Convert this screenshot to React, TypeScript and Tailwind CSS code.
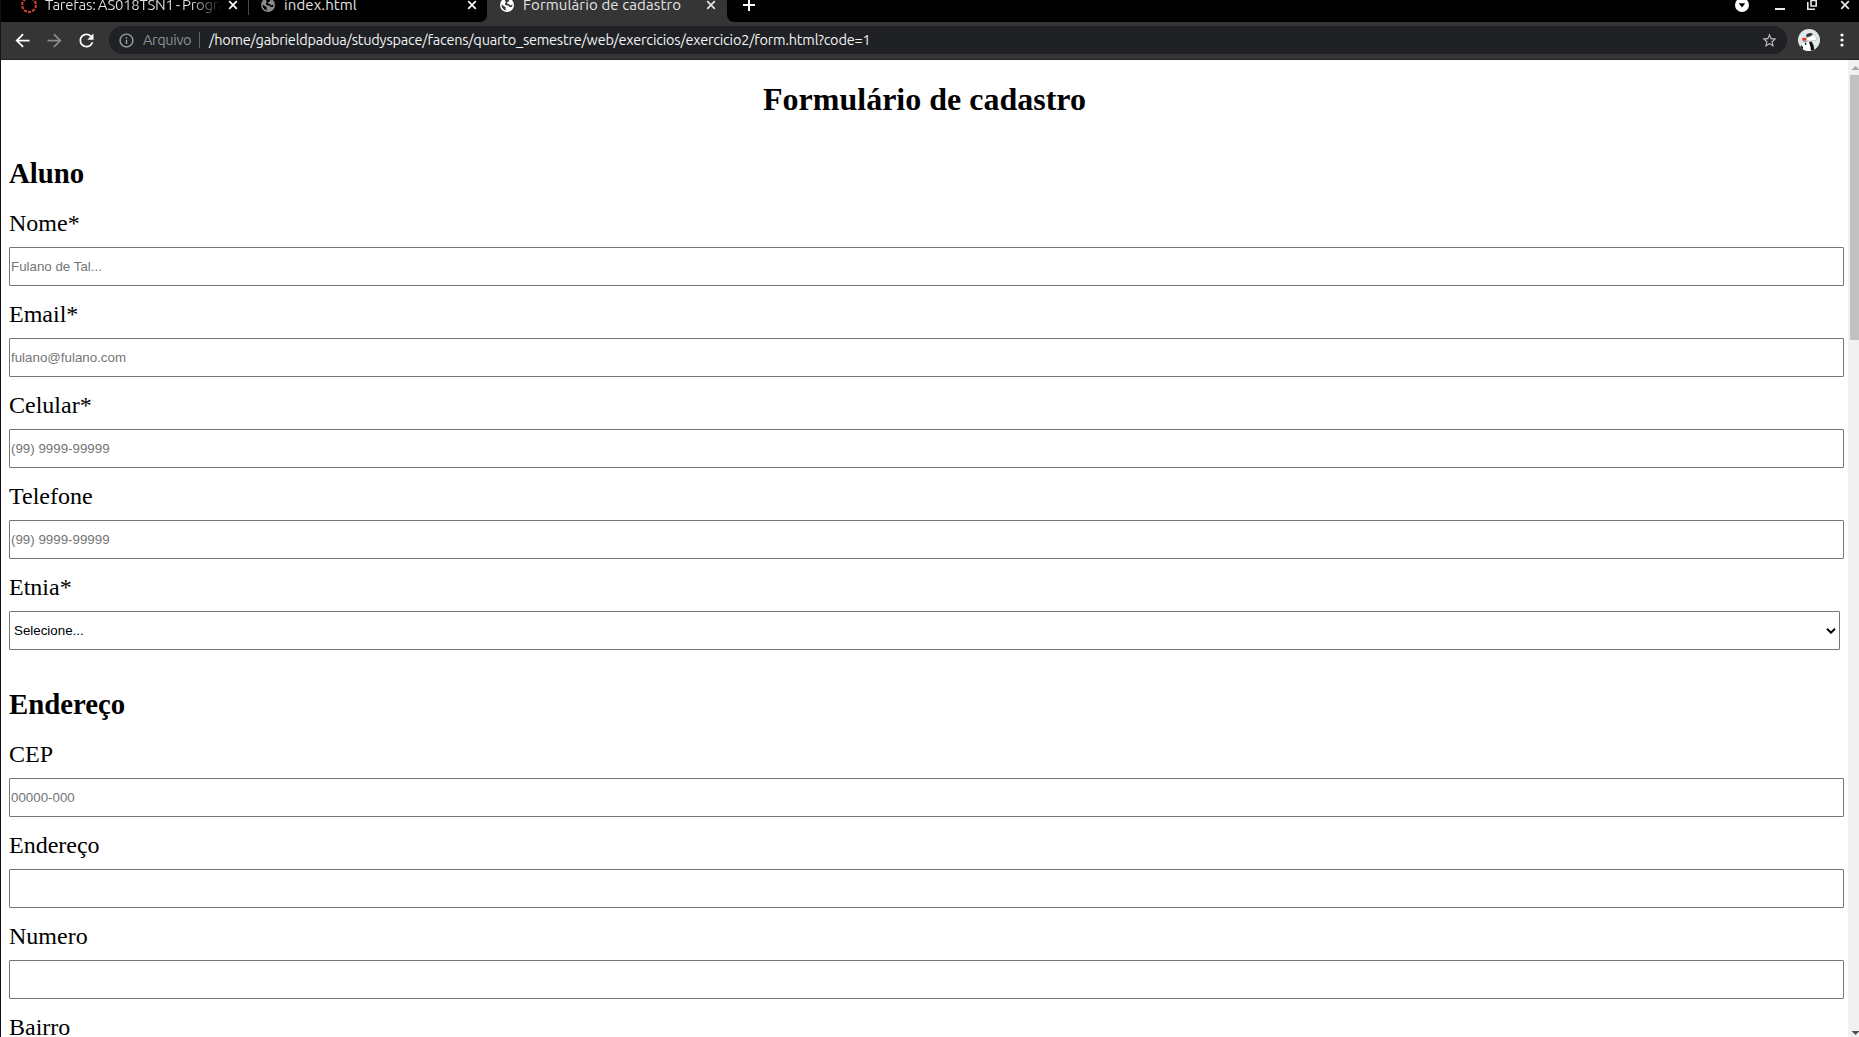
import React from "react";
import { MdArrowBack, MdArrowForward, MdRefresh, MdInfoOutline, MdStarBorder } from "react-icons/md";

const uiFont = "font-['Ubuntu','Noto_Sans',sans-serif]";

function Close({ className = "" }: { className?: string }) {
  return (
    <svg viewBox="0 0 10 10" className={"h-[10px] w-[10px] shrink-0 " + className} fill="none" stroke="currentColor" strokeWidth="1.7">
      <path d="M1.2 1.2 8.8 8.8M8.8 1.2 1.2 8.8" />
    </svg>
  );
}

function Globe({ color, land }: { color: string; land: string }) {
  return (
    <svg viewBox="0 0 14 14" className="h-[14px] w-[14px] shrink-0">
      <circle cx="7" cy="7" r="7" fill={color} />
      <path d="M5.2 1.6 8 1.4 9.3 2.2 8.6 3.6 7 4.2 7.2 5.6 9 6.2 10.3 7.4 12.4 6.4 12.2 8.6 10.6 9.2 9 8.6 8 7.4 5.6 7.2 4.8 5.4 6 4.6 5.2 3.2Z" fill={land} />
      <path d="M1.4 6.4 4.2 8.2 5.8 9.6 5.4 11 6.6 12.6 4 11.8 2 9.6Z" fill={land} />
    </svg>
  );
}

function Avatar() {
  return (
    <svg viewBox="0 0 22 22" className="h-[22px] w-[22px] shrink-0">
      <defs>
        <clipPath id="face">
          <circle cx="11" cy="11" r="11" />
        </clipPath>
      </defs>
      <g clipPath="url(#face)">
        <rect width="22" height="22" fill="#dfe8e9" />
        <path d="M8 6 10 4.5 13 4 15 5 13 8 9 8.5Z" fill="#333" />
        <path d="M8 9 13 7 15 5.5 17 7 19.5 10 17 11.5 12 12 9 11.5Z" fill="#fff" stroke="#999" strokeWidth=".5" />
        <path d="M4 9.5 5.5 8.8 8.3 9 8.2 11.4 4.5 11.8Z" fill="#e23a1e" />
        <path d="M5 11.8 9 12 8 13.2 5 12.8Z" fill="#8b8f90" />
        <path d="M3 16 6 14.5 8 16 10 13 12 14 14 13.5 16 17 16 22 3 22Z" fill="#fff" />
        <path d="M3 16 5 18 5 22 2 22ZM7 13.5 8.5 14.5 8 16 7 15.5ZM11 13 13.5 12.5 15.5 16 16.5 22 13 22 12.5 18Z" fill="#111" />
      </g>
    </svg>
  );
}

function TabStrip() {
  return (
    <div className={"flex h-[22px] shrink-0 bg-black text-[15px] leading-[20px] text-[#e4e4e4] " + uiFont}>
      <div className="flex h-[10px] w-[247px] items-center pl-[20px]">
        <svg viewBox="0 0 16 16" className="h-[16px] w-[16px] shrink-0">
          <circle cx="8" cy="8" r="6.9" fill="none" stroke="#e0452c" strokeWidth="2" strokeDasharray="3.1 1.235" />
        </svg>
        <div className="ml-[8px] w-[177px] overflow-hidden bg-linear-to-r from-[#e4e4e4] from-82% to-transparent bg-clip-text tracking-[-0.3px] whitespace-nowrap text-transparent [word-spacing:-1px]">
          Tarefas: AS018TSN1 - Programação
        </div>
        <Close className="ml-[6px] text-white" />
      </div>
      <div className="h-[15px] w-px bg-[#4a4a4a]" />
      <div className="flex h-[10px] w-[238px] items-center pl-[12px]">
        <Globe color="#8a8a8a" land="#000000" />
        <span className="ml-[9px] tracking-[0.1px]">index.html</span>
        <Close className="mr-[10px] ml-auto text-white" />
      </div>
      <div className="relative h-[22px] w-[240px] bg-[#353535]">
        <div className="absolute bottom-0 -left-[7px] h-[7px] w-[7px] bg-[#353535]">
          <div className="h-full w-full rounded-br-[7px] bg-black" />
        </div>
        <div className="absolute -right-[7px] bottom-0 h-[7px] w-[7px] bg-[#353535]">
          <div className="h-full w-full rounded-bl-[7px] bg-black" />
        </div>
        <div className="flex h-[10px] items-center pl-[13px]">
          <Globe color="#ffffff" land="#353535" />
          <span className="ml-[9px] tracking-[0.12px] whitespace-nowrap">Formulário de cadastro</span>
          <Close className="mr-[11px] ml-auto" />
        </div>
      </div>
      <div className="flex h-[10px] flex-1 items-center pl-[16px] text-white">
        <svg viewBox="0 0 12 12" className="h-[12px] w-[12px]" stroke="currentColor" strokeWidth="2">
          <path d="M6 0V12M0 6H12" />
        </svg>
        <svg viewBox="0 0 14 14" className="ml-auto h-[14px] w-[14px]">
          <circle cx="7" cy="7" r="7" fill="#fff" />
          <path d="M3.7 5.2H10.3L7 9.4Z" fill="#000" />
        </svg>
        <svg viewBox="0 0 10 10" className="ml-[26px] h-[10px] w-[10px]">
          <path d="M0 8H10V10H0Z" fill="#e8e8e8" />
        </svg>
        <svg viewBox="0 0 10 10" className="ml-[22px] h-[10px] w-[10px]" fill="none" stroke="#e8e8e8">
          <path d="M4 0.5H9.2V6H4Z" strokeWidth="1.6" />
          <path d="M.8 2V9.2H8" strokeWidth="1.6" />
        </svg>
        <Close className="mr-[9px] ml-[23px] text-[#e8e8e8]" />
      </div>
    </div>
  );
}

function Toolbar() {
  return (
    <div className={"flex h-[38px] shrink-0 items-center border-b border-[#222222] bg-[#353535] pt-px pb-[2px] pl-[11px] text-[14.5px] " + uiFont}>
      <MdArrowBack className="h-[21px] w-[21px] text-white" />
      <MdArrowForward className="ml-[11px] h-[21px] w-[21px] text-[#8b8b8b]" />
      <MdRefresh className="ml-[11px] h-[21px] w-[21px] text-white" />
      <div className="ml-[12px] flex h-[28px] w-[1678px] items-center rounded-full bg-[#202124] pl-[9px]">
        <MdInfoOutline className="h-[17px] w-[17px] text-[#9aa0a6]" />
        <span className="ml-[8px] w-[49px] tracking-[-0.35px] text-[#8d9299]">Arquivo</span>
        <span className="ml-[7px] h-[16px] w-px bg-[#5f6368]" />
        <span className="ml-[9px] tracking-[-0.21px] whitespace-nowrap text-[#f1f3f4]">
          /home/gabrieldpadua/studyspace/facens/quarto_semestre/web/exercicios/exercicio2/form.html?code=1
        </span>
        <MdStarBorder className="mr-[9px] ml-auto h-[17px] w-[17px] text-[#b9bbbe]" />
      </div>
      <div className="ml-[11px]">
        <Avatar />
      </div>
      <svg viewBox="0 0 4 14" className="ml-[20px] h-[14px] w-[4px]" fill="#fff">
        <circle cx="2" cy="2" r="1.6" />
        <circle cx="2" cy="7" r="1.6" />
        <circle cx="2" cy="12" r="1.6" />
      </svg>
    </div>
  );
}

function Field({ label, placeholder }: { label: string; placeholder?: string }) {
  return (
    <label className="mb-[14px] block">
      <span className="block h-[28px] text-[24px] leading-[28px]">{label}</span>
      <input
        type="text"
        placeholder={placeholder}
        className="mt-[10px] block h-[39px] w-[1835px] rounded-[1px] border border-[#767676] bg-white px-px font-['Liberation_Sans',sans-serif] text-[13.333px] placeholder:text-[#757575]"
      />
    </label>
  );
}

function SelectField({ label }: { label: string }) {
  return (
    <div>
      <span className="block h-[28px] text-[24px] leading-[28px]">{label}</span>
      <button className="mt-[10px] flex h-[39px] w-[1831px] items-center justify-between rounded-[1px] border border-[#767676] bg-white pr-[3px] pl-[4px] font-['Liberation_Sans',sans-serif] text-[13.333px]">
        Selecione...
        <svg viewBox="0 0 10 6" className="h-[6px] w-[10px]" fill="none" stroke="#000" strokeWidth="2">
          <path d="M1 .8 5 4.6 9 .8" />
        </svg>
      </button>
    </div>
  );
}

function Heading({ children }: { children: React.ReactNode }) {
  return <h2 className="mb-[20px] h-[32px] text-[28.8px] leading-[32px] font-bold">{children}</h2>;
}

function Scrollbar() {
  return (
    <div className="flex w-[11px] shrink-0 flex-col bg-[#f1f1f1] pl-[2px]">
      <svg viewBox="0 0 9 15" className="h-[15px] w-[9px] shrink-0">
        <path d="M1.5 10H9.5L5.5 6Z" fill="#a3a3a3" />
      </svg>
      <div className="h-[265px] w-full bg-[#c1c1c1]" />
      <svg viewBox="0 0 9 8" className="mt-auto h-[8px] w-[9px] shrink-0">
        <path d="M1.5 2H9.5L5.5 6Z" fill="#505050" />
      </svg>
    </div>
  );
}

export default function App() {
  return (
    <div className="flex h-[1037px] w-[1859px] flex-col overflow-hidden border-l border-[#150f20] bg-white">
      <TabStrip />
      <Toolbar />
      <div className="flex min-h-0 flex-1">
        <main className="flex-1 overflow-hidden pt-[21px] pl-[8px] font-['Liberation_Serif',serif] text-black">
          <h1 className="mb-[40px] -ml-[8px] h-[36px] text-center text-[32px] leading-[36px] font-bold">Formulário de cadastro</h1>
          <section className="mb-[38px]">
            <Heading>Aluno</Heading>
            <Field label="Nome*" placeholder="Fulano de Tal..." />
            <Field label="Email*" placeholder="fulano@fulano.com" />
            <Field label="Celular*" placeholder="(99) 9999-99999" />
            <Field label="Telefone" placeholder="(99) 9999-99999" />
            <SelectField label="Etnia*" />
          </section>
          <section>
            <Heading>Endereço</Heading>
            <Field label="CEP" placeholder="00000-000" />
            <Field label="Endereço" />
            <Field label="Numero" />
            <Field label="Bairro" />
          </section>
        </main>
        <Scrollbar />
      </div>
    </div>
  );
}
